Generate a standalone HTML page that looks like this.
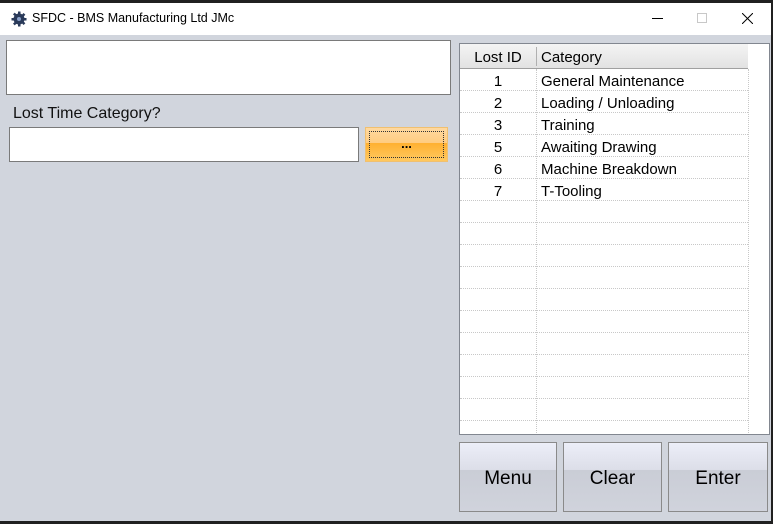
<!DOCTYPE html><html><head><style>
*{margin:0;padding:0;box-sizing:border-box}
body{width:773px;height:524px;background:#202020;position:relative;overflow:hidden;font-family:"Liberation Sans",sans-serif}
.win{position:absolute;left:0;top:3px;width:771px;height:518px;background:#d1d5dd}
.title{position:absolute;left:0;top:0;width:771px;height:32px;background:#fff;font-size:12px;color:#000}
.abs{position:absolute}
.box{position:absolute;background:#fff;border:1px solid #7a7a7a}
.grid{position:absolute;left:459px;top:43px;width:311px;height:392px;background:#fff;border:1px solid #828790;overflow:hidden}
.hdr{position:absolute;left:0;top:0;width:288px;height:25px;background:linear-gradient(#f4f4f4,#e2e2e2);border-bottom:1px solid #a0a0a0;font-size:15px}
.row{position:absolute;left:0;width:288px;height:22px;border-bottom:1px dotted #c8c8c8;font-size:15px}
.c1{position:absolute;left:0;width:76px;text-align:center;top:4px}
.c2{position:absolute;left:81px;top:4px}
.vl{position:absolute;left:76px;top:25px;height:370px;border-left:1px dotted #c8c8c8}
.vr{position:absolute;left:288px;top:25px;height:370px;border-left:1px dotted #c8c8c8}
.btn{position:absolute;top:442px;height:70px;border:1px solid #8a8a8a;background:linear-gradient(#eceef8 0%,#dcdee8 40%,#cacdd6 40%,#d0d3dc 100%);font-size:19px;text-align:center;line-height:72px;color:#000}
</style></head><body>
<div class="win">
<div class="title">
<svg class="abs" style="left:11px;top:8px" width="16" height="16" viewBox="0 0 16 16"><circle cx="8" cy="8" r="5.5" fill="#2a3a5a"/><g fill="#2a3a5a"><rect x="7" y="0.5" width="2.5" height="15"/><rect x="0.5" y="7" width="15" height="2.5"/><rect x="7" y="0.5" width="2.5" height="15" transform="rotate(45 8 8)"/><rect x="7" y="0.5" width="2.5" height="15" transform="rotate(-45 8 8)"/></g><circle cx="8" cy="8" r="2" fill="#8aa0c8"/></svg>
<div class="abs" style="left:32px;top:8px;font-size:12.5px">SFDC - BMS Manufacturing Ltd JMc</div>
<div class="abs" style="left:652px;top:15px;width:11px;height:1px;background:#000"></div>
<div class="abs" style="left:697px;top:10px;width:10px;height:10px;border:1px solid #c8c8c8"></div>
<svg class="abs" style="left:742px;top:10px" width="11" height="11"><path d="M0 0L11 11M11 0L0 11" stroke="#000" stroke-width="1"/></svg>
</div>
<div class="box" style="left:6px;top:37px;width:445px;height:55px"></div>
<div class="abs" style="left:13px;top:102px;font-size:16px;color:#111">Lost Time Category?</div>
<div class="box" style="left:9px;top:124px;width:350px;height:35px"></div>
<div class="abs" style="left:365px;top:124px;width:83px;height:35px;border:1px solid #f0c070;background:linear-gradient(#ffd9a0 0%,#ffcc80 45%,#ffb030 45%,#ffc860 100%)"><div style="position:absolute;left:3px;top:3px;right:3px;bottom:3px;border:1px dotted #333;text-align:center;font-size:13px;font-weight:bold;line-height:24px">...</div></div>
</div>
<div class="grid">
<div class="hdr"><div class="c1" style="top:5px">Lost ID</div><div style="position:absolute;left:76px;top:3px;height:19px;border-left:1px solid #b0b0b0"></div><div class="c2" style="top:5px">Category</div></div>
<div class="vl"></div><div class="vr"></div>
<div class="row" style="top:25px"><div class="c1">1</div><div class="c2">General Maintenance</div></div>
<div class="row" style="top:47px"><div class="c1">2</div><div class="c2">Loading / Unloading</div></div>
<div class="row" style="top:69px"><div class="c1">3</div><div class="c2">Training</div></div>
<div class="row" style="top:91px"><div class="c1">5</div><div class="c2">Awaiting Drawing</div></div>
<div class="row" style="top:113px"><div class="c1">6</div><div class="c2">Machine Breakdown</div></div>
<div class="row" style="top:135px"><div class="c1">7</div><div class="c2">T-Tooling</div></div>
<div class="row" style="top:157px"></div><div class="row" style="top:179px"></div><div class="row" style="top:201px"></div><div class="row" style="top:223px"></div><div class="row" style="top:245px"></div><div class="row" style="top:267px"></div><div class="row" style="top:289px"></div><div class="row" style="top:311px"></div><div class="row" style="top:333px"></div><div class="row" style="top:355px"></div>
</div>
<div class="btn" style="left:459px;width:98px">Menu</div>
<div class="btn" style="left:563px;width:99px">Clear</div>
<div class="btn" style="left:668px;width:100px">Enter</div>
</body></html>
